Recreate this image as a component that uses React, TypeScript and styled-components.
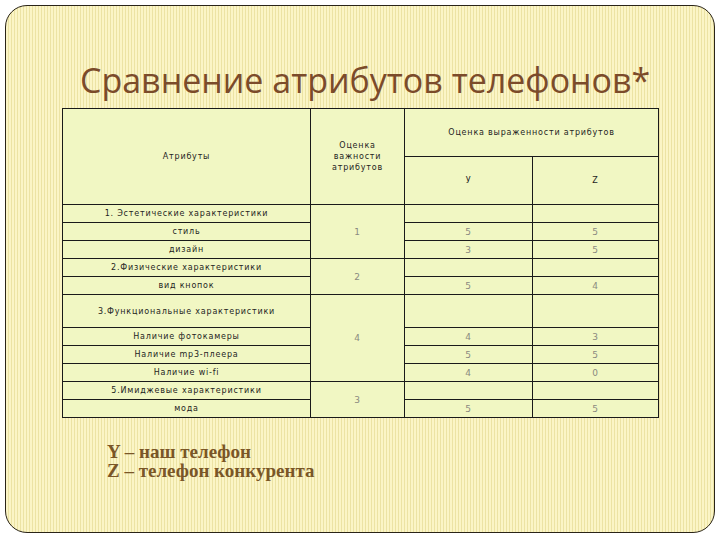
import React from "react";
import styled, { createGlobalStyle } from "styled-components";

const GlobalStyle = createGlobalStyle`
  html, body {
    margin: 0;
    padding: 0;
    background: #ffffff;
  }
`;

type Row = {
  name: string;
  tall?: boolean;
  weight?: { value: string; span: number };
  y: string;
  z: string;
};

const rows: Row[] = [
  { name: "1. Эстетические характеристики", weight: { value: "1", span: 3 }, y: "", z: "" },
  { name: "стиль", y: "5", z: "5" },
  { name: "дизайн", y: "3", z: "5" },
  { name: "2.Физические характеристики", weight: { value: "2", span: 2 }, y: "", z: "" },
  { name: "вид кнопок", y: "5", z: "4" },
  { name: "3.Функциональные характеристики", tall: true, weight: { value: "4", span: 4 }, y: "", z: "" },
  { name: "Наличие фотокамеры", y: "4", z: "3" },
  { name: "Наличие mp3-плеера", y: "5", z: "5" },
  { name: "Наличие wi-fi", y: "4", z: "0" },
  { name: "5.Имиджевые характеристики", weight: { value: "3", span: 2 }, y: "", z: "" },
  { name: "мода", y: "5", z: "5" },
];

export default function App() {
  return (
    <>
      <GlobalStyle />
      <Page>
        <Slide>
          <Title>Сравнение атрибутов телефонов*</Title>
          <Table>
            <colgroup>
              <col style={{ width: 248 }} />
              <col style={{ width: 94 }} />
              <col style={{ width: 128 }} />
              <col style={{ width: 126 }} />
            </colgroup>
            <thead>
              <tr>
                <HeadCell rowSpan={2}>Атрибуты</HeadCell>
                <HeadCell rowSpan={2}>
                  Оценка
                  <br />
                  важности
                  <br />
                  атрибутов
                </HeadCell>
                <HeadCell colSpan={2}>Оценка выраженности атрибутов</HeadCell>
              </tr>
              <tr>
                <HeadCell>У</HeadCell>
                <HeadCell>Z</HeadCell>
              </tr>
            </thead>
            <tbody>
              {rows.map((row) => (
                <BodyRow key={row.name} $tall={row.tall}>
                  <NameCell>{row.name}</NameCell>
                  {row.weight && (
                    <ValueCell rowSpan={row.weight.span}>{row.weight.value}</ValueCell>
                  )}
                  <ValueCell>{row.y}</ValueCell>
                  <ValueCell>{row.z}</ValueCell>
                </BodyRow>
              ))}
            </tbody>
          </Table>
          <Legend>
            <div>Y – наш телефон</div>
            <div>Z – телефон конкурента</div>
          </Legend>
        </Slide>
      </Page>
    </>
  );
}

const Page = styled.div`
  width: 720px;
  height: 540px;
  padding: 5px 5px 0 5px;
  box-sizing: border-box;
`;

const Slide = styled.div`
  width: 710px;
  height: 528px;
  box-sizing: border-box;
  border: 1px solid #2a2418;
  border-radius: 22px;
  background-color: #fbf5c6;
  background-image: repeating-linear-gradient(
    90deg,
    #fbf5c6 0px,
    #fbf5c6 2px,
    #ece3a4 2px,
    #ece3a4 3px
  );
  padding: 57px 0 0 56px;
  display: flex;
  flex-direction: column;
  align-items: flex-start;
`;

const Title = styled.h1`
  margin: 0 0 11px 18px;
  font-family: "Open Sans", "Noto Sans", sans-serif;
  font-weight: 400;
  font-size: 34px;
  line-height: 34px;
  color: #7b4b2a;
  white-space: nowrap;
`;

const Table = styled.table`
  border-collapse: collapse;
  table-layout: fixed;
  width: 597px;
  background: #f1f7c3;
  font-family: "DejaVu Sans", "Liberation Sans", sans-serif;
  font-size: 8px;
  letter-spacing: 0.8px;
  border: 1px solid #1a1a1a;
`;

const HeadCell = styled.th`
  border: 1px solid #1a1a1a;
  height: 47px;
  padding: 0;
  font-weight: 400;
  color: #1e1e1e;
  text-align: center;
  vertical-align: middle;
  line-height: 11px;
`;

const BodyRow = styled.tr<{ $tall?: boolean }>`
  height: ${(p) => (p.$tall ? "33px" : "18px")};
`;

const NameCell = styled.td`
  border: 1px solid #1a1a1a;
  padding: 0;
  text-align: center;
  color: #1e1e1e;
  white-space: nowrap;
`;

const ValueCell = styled.td`
  border: 1px solid #1a1a1a;
  padding: 0;
  text-align: center;
  color: #8a8a80;
  font-size: 9px;
`;

const Legend = styled.div`
  margin: 24px 0 0 45px;
  font-family: "Liberation Serif", "DejaVu Serif", serif;
  font-weight: 700;
  font-size: 19px;
  line-height: 19px;
  color: #7a5627;
`;
